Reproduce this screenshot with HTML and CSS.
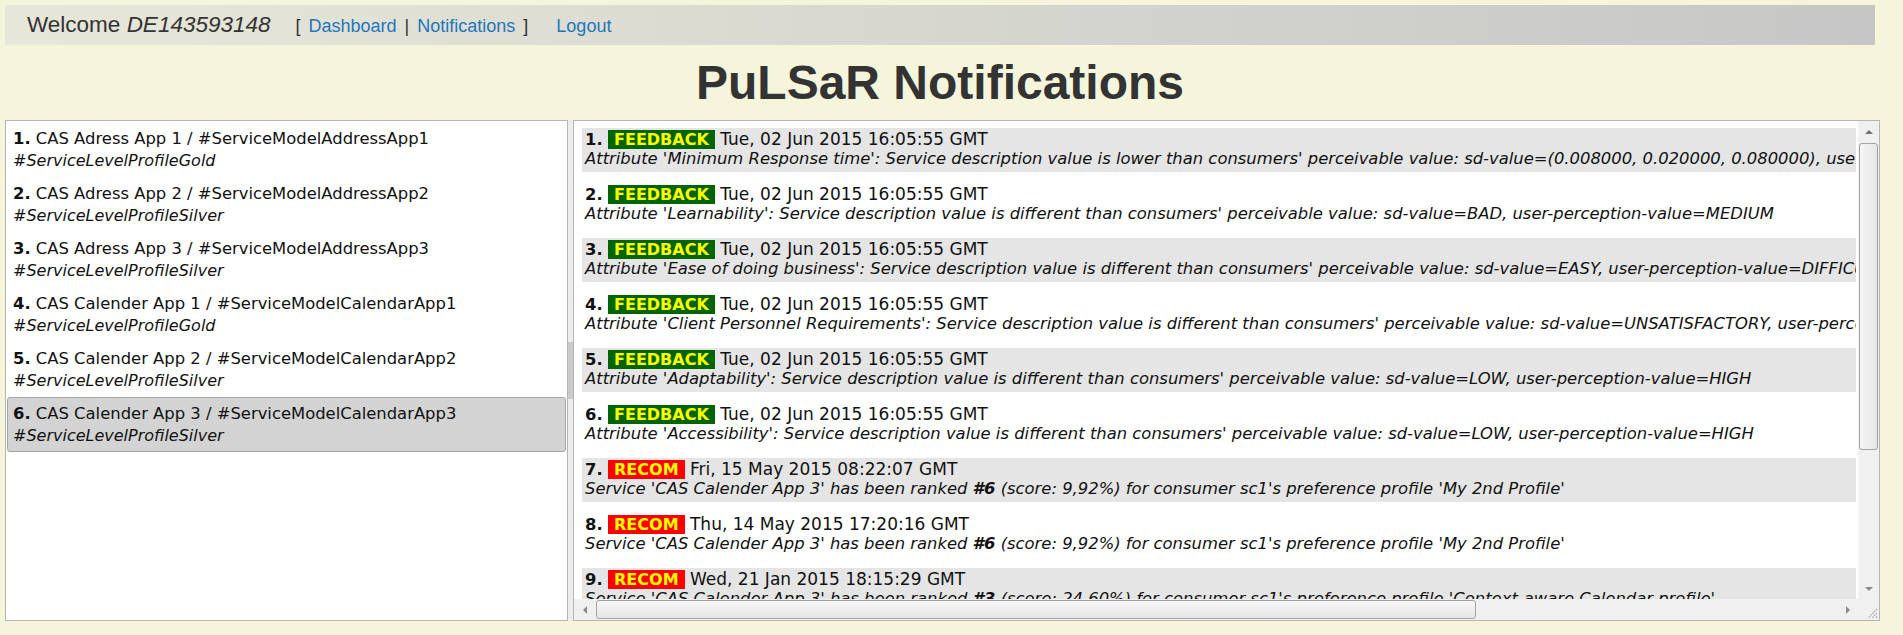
FILE: index.html
```html
<!DOCTYPE html>
<html lang="en">
<head>
<meta charset="utf-8">
<title>PuLSaR Notifications</title>
<link rel="stylesheet" href="styles.css">
</head>
<body>
<div class="page">
  <header class="topbar">
    <span class="welcome">Welcome <i>DE143593148</i></span>
    <nav class="nav">
      <span class="br">[</span>
      <a href="#">Dashboard</a>
      <span class="br">|</span>
      <a href="#">Notifications</a>
      <span class="br">]</span>
    </nav>
    <a class="logout" href="#">Logout</a>
  </header>

  <h1 class="title">PuLSaR Notifications</h1>

  <div class="panes">
    <ul class="services">
      <li class="svc"><b>1.</b> CAS Adress App 1 / #ServiceModelAddressApp1<br><i>#ServiceLevelProfileGold</i></li>
      <li class="svc"><b>2.</b> CAS Adress App 2 / #ServiceModelAddressApp2<br><i>#ServiceLevelProfileSilver</i></li>
      <li class="svc"><b>3.</b> CAS Adress App 3 / #ServiceModelAddressApp3<br><i>#ServiceLevelProfileSilver</i></li>
      <li class="svc"><b>4.</b> CAS Calender App 1 / #ServiceModelCalendarApp1<br><i>#ServiceLevelProfileGold</i></li>
      <li class="svc"><b>5.</b> CAS Calender App 2 / #ServiceModelCalendarApp2<br><i>#ServiceLevelProfileSilver</i></li>
      <li class="svc selected"><b>6.</b> CAS Calender App 3 / #ServiceModelCalendarApp3<br><i>#ServiceLevelProfileSilver</i></li>
    </ul>

    <div class="splitter"><div class="grip"></div></div>

    <div class="notif-pane">
      <div class="notif-list">
        <div class="notif">
          <div><b class="num">1.</b> <span class="badge feedback">FEEDBACK</span> Tue, 02 Jun 2015 16:05:55 GMT</div>
          <div class="msg">Attribute 'Minimum Response time': Service description value is lower than consumers' perceivable value: sd-value=(0.008000, 0.020000, 0.080000), user-perception-value=(0.100000, 0.200000, 0.500000)</div>
        </div>
        <div class="notif">
          <div><b class="num">2.</b> <span class="badge feedback">FEEDBACK</span> Tue, 02 Jun 2015 16:05:55 GMT</div>
          <div class="msg">Attribute 'Learnability': Service description value is different than consumers' perceivable value: sd-value=BAD, user-perception-value=MEDIUM</div>
        </div>
        <div class="notif">
          <div><b class="num">3.</b> <span class="badge feedback">FEEDBACK</span> Tue, 02 Jun 2015 16:05:55 GMT</div>
          <div class="msg">Attribute 'Ease of doing business': Service description value is different than consumers' perceivable value: sd-value=EASY, user-perception-value=DIFFICULT</div>
        </div>
        <div class="notif">
          <div><b class="num">4.</b> <span class="badge feedback">FEEDBACK</span> Tue, 02 Jun 2015 16:05:55 GMT</div>
          <div class="msg">Attribute 'Client Personnel Requirements': Service description value is different than consumers' perceivable value: sd-value=UNSATISFACTORY, user-perception-value=SATISFACTORY</div>
        </div>
        <div class="notif">
          <div><b class="num">5.</b> <span class="badge feedback">FEEDBACK</span> Tue, 02 Jun 2015 16:05:55 GMT</div>
          <div class="msg">Attribute 'Adaptability': Service description value is different than consumers' perceivable value: sd-value=LOW, user-perception-value=HIGH</div>
        </div>
        <div class="notif">
          <div><b class="num">6.</b> <span class="badge feedback">FEEDBACK</span> Tue, 02 Jun 2015 16:05:55 GMT</div>
          <div class="msg">Attribute 'Accessibility': Service description value is different than consumers' perceivable value: sd-value=LOW, user-perception-value=HIGH</div>
        </div>
        <div class="notif">
          <div><b class="num">7.</b> <span class="badge recom">RECOM</span> Fri, 15 May 2015 08:22:07 GMT</div>
          <div class="msg">Service 'CAS Calender App 3' has been ranked <b>#6</b> (score: 9,92%) for consumer sc1's preference profile 'My 2nd Profile'</div>
        </div>
        <div class="notif">
          <div><b class="num">8.</b> <span class="badge recom">RECOM</span> Thu, 14 May 2015 17:20:16 GMT</div>
          <div class="msg">Service 'CAS Calender App 3' has been ranked <b>#6</b> (score: 9,92%) for consumer sc1's preference profile 'My 2nd Profile'</div>
        </div>
        <div class="notif">
          <div><b class="num">9.</b> <span class="badge recom">RECOM</span> Wed, 21 Jan 2015 18:15:29 GMT</div>
          <div class="msg">Service 'CAS Calender App 3' has been ranked <b>#3</b> (score: 24,60%) for consumer sc1's preference profile 'Context-aware Calendar profile'</div>
        </div>
        <div class="notif">
          <div><b class="num">10.</b> <span class="badge recom">RECOM</span> Wed, 21 Jan 2015 18:10:02 GMT</div>
          <div class="msg">Service 'CAS Calender App 3' has been ranked <b>#4</b> (score: 18,35%) for consumer sc1's preference profile 'My 2nd Profile'</div>
        </div>
        <div class="notif">
          <div><b class="num">11.</b> <span class="badge recom">RECOM</span> Tue, 20 Jan 2015 11:42:51 GMT</div>
          <div class="msg">Service 'CAS Calender App 3' has been ranked <b>#2</b> (score: 31,07%) for consumer sc1's preference profile 'Context-aware Calendar profile'</div>
        </div>
      </div>

      <div class="vscroll">
        <div class="sb-btn"><span class="arr arr-up"></span></div>
        <div class="sb-track"><div class="thumb thumb-v"></div></div>
        <div class="sb-btn"><span class="arr arr-down"></span></div>
      </div>

      <div class="hscroll">
        <div class="sb-btn"><span class="arr arr-left"></span></div>
        <div class="sb-track"><div class="thumb thumb-h"></div></div>
        <div class="sb-btn"><span class="arr arr-right"></span></div>
      </div>

      <div class="sb-corner">
        <svg width="21" height="21" viewBox="0 0 21 21">
          <g stroke="#a3a3a3" stroke-width="1.2" stroke-dasharray="1.5 1">
            <line x1="19" y1="10" x2="10" y2="19"/>
            <line x1="19" y1="14" x2="14" y2="19"/>
            <line x1="19" y1="17.5" x2="17.5" y2="19"/>
          </g>
        </svg>
      </div>
    </div>
  </div>
</div>
</body>
</html>
```

FILE: styles.css
```css
html, body {
  margin: 0;
  padding: 0;
  background: #f5f5dc;
}

.page {
  width: 1875px;
  padding: 5px 0 0 5px;
  font-family: "Liberation Sans", Arial, sans-serif;
  color: #333;
}

/* ---------- top bar ---------- */
.topbar {
  display: flex;
  align-items: baseline;
  height: 40px;
  margin-right: 5px;
  padding-left: 22px;
  line-height: 40px;
  background: linear-gradient(to right, #e7e7d9, #c6c6c6);
}

.welcome {
  font-size: 22.5px;
  color: #333;
}

.nav {
  display: flex;
  align-items: baseline;
  gap: 8px;
  margin-left: 25px;
  font-size: 18px;
}

.br {
  color: #333;
}

.nav a,
.logout {
  color: #2277bb;
  text-decoration: none;
  font-size: 18px;
}

.logout {
  margin-left: 28px;
}

/* ---------- title ---------- */
.title {
  margin: 10px 5px 9px 0;
  font-size: 48px;
  line-height: 56px;
  font-weight: 700;
  text-align: center;
  color: #333;
}

/* ---------- panes ---------- */
.panes {
  display: flex;
  height: 501px;
}

.services {
  box-sizing: border-box;
  width: 563px;
  height: 100%;
  margin: 0;
  padding: 1px 1px 0 1px;
  list-style: none;
  background: #fff;
  border: 1px solid #b4b4b4;
  font-family: "DejaVu Sans", Verdana, sans-serif;
  font-size: 16.4px;
  line-height: 22px;
  color: #111;
}

.svc {
  padding: 5px 5px 4px;
  border: 1px solid transparent;
  border-radius: 3px;
  white-space: nowrap;
}

.svc i {
  font-size: 16px;
}

.svc.selected {
  background: #d3d3d3;
  border-color: #a5a5a5;
}

.splitter {
  display: flex;
  align-items: center;
  width: 5px;
  background: #ececec;
}

.grip {
  width: 5px;
  height: 57px;
  background: #cbcbcb;
}

/* ---------- notifications pane ---------- */
.notif-pane {
  box-sizing: border-box;
  width: 1307px;
  height: 100%;
  display: grid;
  grid-template-columns: 1fr 21px;
  grid-template-rows: 1fr 21px;
  background: #fff;
  border: 1px solid #b4b4b4;
}

.notif-list {
  min-width: 0;
  min-height: 0;
  overflow: hidden;
  padding: 7px 2px 0 8px;
  font-family: "DejaVu Sans", Verdana, sans-serif;
  font-size: 17px;
  line-height: 19px;
  color: #111;
}

.notif {
  padding: 2px 0 4px 3px;
  margin-bottom: 11px;
  overflow: hidden;
  white-space: nowrap;
}

.notif:nth-child(odd) {
  background: #e5e5e5;
}

.num {
  font-size: 16.4px;
}

.msg {
  font-style: italic;
  font-size: 16.4px;
}

.badge {
  padding: 0 6px;
  font-size: 16px;
  font-weight: 700;
  color: #ffff00;
}

.badge.feedback {
  background: #006400;
}

.badge.recom {
  background: #ff0000;
}

/* ---------- drawn scrollbars ---------- */
.vscroll,
.hscroll {
  display: flex;
  background: #f0f0f0;
}

.vscroll {
  flex-direction: column;
}

.sb-btn {
  flex: 0 0 21px;
  width: 21px;
  height: 21px;
  display: flex;
  align-items: center;
  justify-content: center;
}

.sb-track {
  flex: 1;
  display: flex;
  padding: 1px;
}

.vscroll .sb-track {
  flex-direction: column;
}

.thumb {
  box-sizing: border-box;
  border: 1px solid #a2a2a2;
  border-radius: 3px;
}

.thumb-v {
  height: 307px;
  background: linear-gradient(to right, #f6f6f6, #e6e6e6);
}

.thumb-h {
  width: 880px;
  background: linear-gradient(to bottom, #f6f6f6, #e6e6e6);
}

.arr {
  width: 0;
  height: 0;
}

.arr-up {
  border-left: 4px solid transparent;
  border-right: 4px solid transparent;
  border-bottom: 4px solid #707070;
}

.arr-down {
  border-left: 4px solid transparent;
  border-right: 4px solid transparent;
  border-top: 4px solid #8a8a8a;
}

.arr-left {
  border-top: 4px solid transparent;
  border-bottom: 4px solid transparent;
  border-right: 4px solid #8a8a8a;
}

.arr-right {
  border-top: 4px solid transparent;
  border-bottom: 4px solid transparent;
  border-left: 4px solid #8a8a8a;
}

.sb-corner {
  background: #f0f0f0;
}

.sb-corner svg {
  display: block;
}
```
